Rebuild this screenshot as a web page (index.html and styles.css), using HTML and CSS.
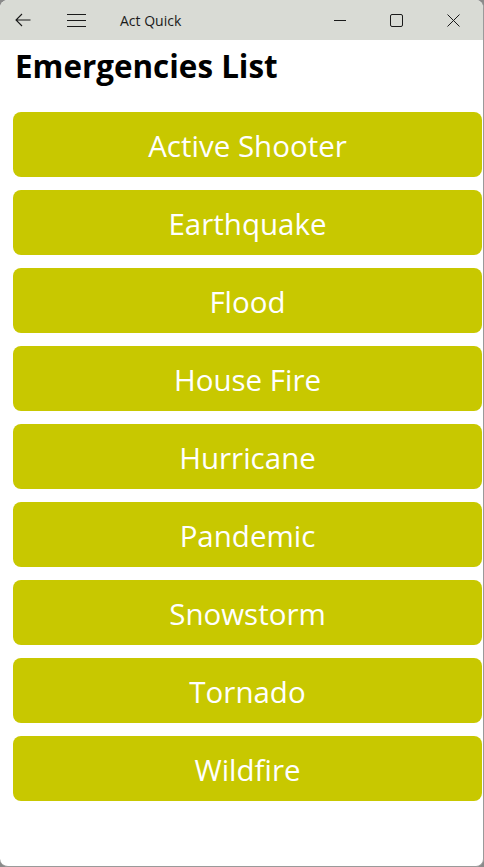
FILE: index.html
```html
<!DOCTYPE html>
<html lang="en">
<head>
    <meta charset="UTF-8">
    <meta name="viewport" content="width=device-width, initial-scale=1.0">
    <title>Act Quick</title>
    <link rel="stylesheet" href="styles.css">
</head>
<body>
    <div class="window">
        <div class="titlebar">
            <div class="nav-btn back">
                <svg width="16" height="14" viewBox="0 0 16 14"><path d="M7 1 L1 7 L7 13 M1 7 H15.5" fill="none" stroke="#1a1a1a" stroke-width="1.1"/></svg>
            </div>
            <div class="nav-btn menu">
                <svg width="19" height="14" viewBox="0 0 19 14"><path d="M0 1.5 H19 M0 7.5 H19 M0 13.5 H19" fill="none" stroke="#1a1a1a" stroke-width="1.1"/></svg>
            </div>
            <span class="app-title">Act Quick</span>
            <div class="caption">
                <div class="cap-btn">
                    <svg width="12" height="12" viewBox="0 0 12 12"><path d="M0 6.5 H12" stroke="#1a1a1a" stroke-width="1"/></svg>
                </div>
                <div class="cap-btn">
                    <svg width="13" height="13" viewBox="0 0 13 13"><rect x="0.5" y="0.5" width="12" height="12" rx="1.5" fill="none" stroke="#1a1a1a" stroke-width="1"/></svg>
                </div>
                <div class="cap-btn">
                    <svg width="13" height="13" viewBox="0 0 13 13"><path d="M0.5 0.5 L12.5 12.5 M12.5 0.5 L0.5 12.5" stroke="#1a1a1a" stroke-width="1"/></svg>
                </div>
            </div>
        </div>
        <div class="content">
            <h1>Emergencies List</h1>
            <div class="list">
                <button class="item">Active Shooter</button>
                <button class="item">Earthquake</button>
                <button class="item">Flood</button>
                <button class="item">House Fire</button>
                <button class="item">Hurricane</button>
                <button class="item">Pandemic</button>
                <button class="item">Snowstorm</button>
                <button class="item">Tornado</button>
                <button class="item">Wildfire</button>
            </div>
        </div>
    </div>
</body>
</html>
```

FILE: styles.css
```css
html, body {
    margin: 0;
    height: 100%;
}
body {
    background-color: #8a8a8a;
    font-family: "Open Sans", "Noto Sans", sans-serif;
}
.window {
    height: 867px;
    box-sizing: border-box;
    background: white;
    border-right: 1px solid #9a9a9a;
    border-bottom: 1px solid #9a9a9a;
    border-radius: 8px;
    overflow: hidden;
}
.titlebar {
    height: 40px;
    background-color: #d9dbd5;
    display: flex;
    align-items: center;
}
.nav-btn {
    display: flex;
    align-items: center;
}
.back {
    margin-left: 15px;
}
.menu {
    margin-left: 36px;
}
.app-title {
    margin-left: 34px;
    font-size: 14px;
    color: #1a1a1a;
    font-family: "Open Sans", sans-serif;
}
.caption {
    margin-left: auto;
    display: flex;
    align-items: center;
    margin-right: 23px;
    gap: 44px;
}
.cap-btn {
    display: flex;
    align-items: center;
}
.content {
    padding: 0 1px 0 13px;
}
h1 {
    margin: 5px 0 0 2px;
    font-size: 31.4px;
    font-weight: 700;
    line-height: 42px;
    color: #000;
}
.list {
    display: flex;
    flex-direction: column;
    gap: 13px;
    margin-top: 25px;
}
.item {
    height: 65px;
    border: none;
    border-radius: 8px;
    background-color: #c8c800;
    color: white;
    font-family: "Open Sans", "Noto Sans", sans-serif;
    font-size: 29.5px;
    padding: 2px 0 0;
    cursor: pointer;
}
```
